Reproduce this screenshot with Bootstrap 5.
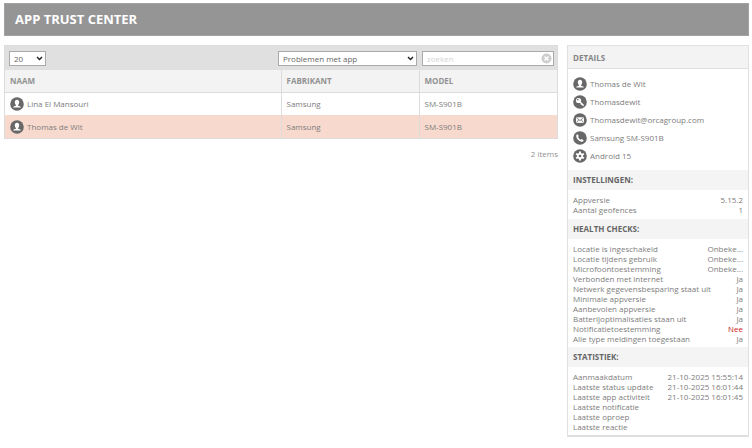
<!DOCTYPE html>
<html lang="nl">
<head>
<meta charset="utf-8">
<meta name="viewport" content="width=device-width, initial-scale=1">
<title>App Trust Center</title>
<link href="https://cdn.jsdelivr.net/npm/bootstrap@5.3.0/dist/css/bootstrap.min.css" rel="stylesheet">
<style>
body{font-family:"Open Sans","Noto Sans",sans-serif;font-size:8px;line-height:10px;color:#7d7d7d;background:#fff}
.page{padding:3px 3px 0 4px}
.banner{background:#959595;border:1px solid #a2a2a2;color:#fff;padding:8px 10px}
.banner h1{font-size:13px;line-height:15px;font-weight:700}
.columns{gap:9px;margin-top:9px}
.details{width:182px;border:1px solid #e0e0e0;border-bottom-width:2px}
.panel{border:1px solid #dcdcdc}
.toolbar{background:#e0e0e0;padding:5px 3px 4px 4px;gap:5px}
.toolbar .form-select,.toolbar .form-control{font-size:8px;line-height:11px;height:15px;min-height:0;padding:0 4px;border:1px solid #aaa;border-radius:0;color:#666;background-color:#fff}
.toolbar .form-select{background-image:url("data:image/svg+xml,%3Csvg xmlns='http://www.w3.org/2000/svg' viewBox='0 0 8 6'%3E%3Cpath d='M1 1.2l3 3 3-3' fill='none' stroke='%23222' stroke-width='1.7'/%3E%3C/svg%3E");background-size:7px 5px;background-position:right 2px center}
.toolbar .form-control::placeholder{color:#d4d4d4;opacity:1}
.toolbar .size-select{width:37px}
.toolbar .filter-select{width:139px}
.search{width:132px}
.clear{right:2px;top:2px;width:11px;height:11px}
.icon{width:14px;height:14px;flex:none;display:block}
.devices{table-layout:fixed;color:#7d7d7d}
.devices>:not(caption)>*>*{padding:0 5px;border:0;height:23px;vertical-align:middle;color:inherit;background:none;box-shadow:none}
.devices>:not(caption)>*>*+*{border-left:1px solid #dcdcdc}
.devices>thead>tr>th{background:#f3f3f3;height:22px;border-bottom:1px solid #dcdcdc;color:#929292}
.devices>tbody>.selected>td{background:#f8d9cd}
.count{margin-top:10px;color:#929292}
.details h2{font-size:8px;line-height:11px;font-weight:700;margin:0;padding:6px 5px 5px;border-bottom:1px solid #e0e0e0;background:#f3f3f3;color:#858585}
.details h3{font-size:8px;line-height:10px;font-weight:700;margin:0;padding:5px;background:#f4f4f4;color:#666}
.contact{padding:8px 5px 7px;gap:4px}
.contact li,.person{gap:3px}
.facts{padding:5px 5px 4px}
.facts.health,.facts.stats{padding-bottom:3px}
.facts dt{font-weight:400}
.facts .failed{color:#d02020}
</style>
</head>
<body>
<svg class="d-none" aria-hidden="true">
<symbol id="user" viewBox="0 0 14 14"><circle cx="7" cy="7" r="6.8" fill="#686868"/><path fill="#fff" d="M7 2.8c-1.5 0-2.2 1-2.2 2.4 0 1.200.5 2.200 1.100 2.700v.8L3.700 9.500c-.4.200-.5.500-.5 1h7.600c0-.5-.1-.8-.5-1L8.100 8.700v-.8c.6-.5 1.100-1.500 1.100-2.700C9.200 3.800 8.500 2.800 7 2.800z"/></symbol>
<symbol id="key" viewBox="0 0 14 14"><circle cx="7" cy="7" r="6.8" fill="#686868"/><circle cx="5.500" cy="5.500" r="2.600" fill="#fff"/><circle cx="4.800" cy="4.800" r=".8" fill="#686868"/><path d="M7 7l3.600 3.600M8.700 8.700l-.7.900" fill="none" stroke="#fff" stroke-width="1.500"/></symbol>
<symbol id="mail" viewBox="0 0 14 14"><circle cx="7" cy="7" r="6.800" fill="#686868"/><path fill="#fff" d="M3 4.300h8v5.600H3z"/><path d="M3.300 4.700L7 7.600l3.700-2.900M3.300 9.600l2.400-2.700M10.700 9.600L8.300 6.900" fill="none" stroke="#686868" stroke-width=".8"/></symbol>
<symbol id="phone" viewBox="0 0 14 14"><circle cx="7" cy="7" r="6.800" fill="#686868"/><path fill="#fff" d="M4.500 3.200l1.300 1.900-.7.900c.4 1.200 1.300 2.200 2.600 2.700l.9-.8 2 1.300c-.3 1.100-1.100 1.700-2.200 1.500C5.700 10.200 3.600 8 3.200 5.300c-.1-1 .4-1.800 1.300-2.100z"/></symbol>
<symbol id="gear" viewBox="0 0 14 14"><circle cx="7" cy="7" r="6.800" fill="#686868"/><path d="M7 2.500v9M3.100 4.750l7.800 4.500M10.900 4.750l-7.800 4.500" stroke="#fff" stroke-width="2"/><circle cx="7" cy="7" r="3.100" fill="#fff"/><circle cx="7" cy="7" r="1.300" fill="#686868"/></symbol>
</svg>
<div class="page">
<header class="banner"><h1 class="m-0">APP TRUST CENTER</h1></header>
<div class="columns d-flex align-items-start">
<main class="flex-grow-1">
<div class="panel">
<form class="toolbar d-flex align-items-center">
<select class="form-select size-select me-auto" aria-label="Items per pagina"><option>20</option></select>
<select class="form-select filter-select" aria-label="Filter"><option>Problemen met app</option></select>
<div class="search position-relative"><input class="form-control" type="text" placeholder="zoeken" aria-label="Zoeken">
<button type="reset" class="clear btn p-0 border-0 position-absolute d-block" aria-label="Wissen"><svg class="d-block" viewBox="0 0 11 11"><circle cx="5.500" cy="5.500" r="5" fill="#cdcdcd"/><path d="M3.500 3.500l4 4M7.500 3.500l-4 4" stroke="#fff" stroke-width="1.500"/></svg></button></div>
</form>
<table class="table devices m-0">
<colgroup><col class="w-50"><col class="w-25"><col class="w-25"></colgroup>
<thead><tr><th>NAAM</th><th>FABRIKANT</th><th>MODEL</th></tr></thead>
<tbody>
<tr><td><div class="person d-flex align-items-center"><svg class="icon"><use href="#user"/></svg>Lina El Mansouri</div></td><td>Samsung</td><td>SM-S901B</td></tr>
<tr class="selected"><td><div class="person d-flex align-items-center"><svg class="icon"><use href="#user"/></svg>Thomas de Wit</div></td><td>Samsung</td><td>SM-S901B</td></tr>
</tbody>
</table>
</div>
<p class="count text-end mb-0">2 items</p>
</main>
<aside class="details flex-shrink-0">
<h2>DETAILS</h2>
<ul class="contact list-unstyled d-flex flex-column m-0">
<li class="d-flex align-items-center"><svg class="icon"><use href="#user"/></svg>Thomas de Wit</li>
<li class="d-flex align-items-center"><svg class="icon"><use href="#key"/></svg>Thomasdewit</li>
<li class="d-flex align-items-center"><svg class="icon"><use href="#mail"/></svg>Thomasdewit@orcagroup.com</li>
<li class="d-flex align-items-center"><svg class="icon"><use href="#phone"/></svg>Samsung SM-S901B</li>
<li class="d-flex align-items-center"><svg class="icon"><use href="#gear"/></svg>Android 15</li>
</ul>
<h3>INSTELLINGEN:</h3>
<dl class="facts m-0">
<div class="d-flex justify-content-between"><dt>Appversie</dt><dd class="m-0">5.15.2</dd></div>
<div class="d-flex justify-content-between"><dt>Aantal geofences</dt><dd class="m-0">1</dd></div>
</dl>
<h3>HEALTH CHECKS:</h3>
<dl class="facts health m-0">
<div class="d-flex justify-content-between"><dt>Locatie is ingeschakeld</dt><dd class="m-0">Onbeke...</dd></div>
<div class="d-flex justify-content-between"><dt>Locatie tijdens gebruik</dt><dd class="m-0">Onbeke...</dd></div>
<div class="d-flex justify-content-between"><dt>Microfoontoestemming</dt><dd class="m-0">Onbeke...</dd></div>
<div class="d-flex justify-content-between"><dt>Verbonden met internet</dt><dd class="m-0">Ja</dd></div>
<div class="d-flex justify-content-between"><dt>Netwerk gegevensbesparing staat uit</dt><dd class="m-0">Ja</dd></div>
<div class="d-flex justify-content-between"><dt>Minimale appversie</dt><dd class="m-0">Ja</dd></div>
<div class="d-flex justify-content-between"><dt>Aanbevolen appversie</dt><dd class="m-0">Ja</dd></div>
<div class="d-flex justify-content-between"><dt>Batterijoptimalisaties staan uit</dt><dd class="m-0">Ja</dd></div>
<div class="d-flex justify-content-between"><dt>Notificatietoestemming</dt><dd class="failed m-0">Nee</dd></div>
<div class="d-flex justify-content-between"><dt>Alle type meldingen toegestaan</dt><dd class="m-0">Ja</dd></div>
</dl>
<h3>STATISTIEK:</h3>
<dl class="facts stats m-0">
<div class="d-flex justify-content-between"><dt>Aanmaakdatum</dt><dd class="m-0">21-10-2025 15:55:14</dd></div>
<div class="d-flex justify-content-between"><dt>Laatste status update</dt><dd class="m-0">21-10-2025 16:01:44</dd></div>
<div class="d-flex justify-content-between"><dt>Laatste app activiteit</dt><dd class="m-0">21-10-2025 16:01:45</dd></div>
<div class="d-flex justify-content-between"><dt>Laatste notificatie</dt><dd class="m-0"></dd></div>
<div class="d-flex justify-content-between"><dt>Laatste oproep</dt><dd class="m-0"></dd></div>
<div class="d-flex justify-content-between"><dt>Laatste reactie</dt><dd class="m-0"></dd></div>
</dl>
</aside>
</div>
</div>
<script src="https://cdn.jsdelivr.net/npm/bootstrap@5.3.0/dist/js/bootstrap.bundle.min.js"></script>
</body>
</html>
